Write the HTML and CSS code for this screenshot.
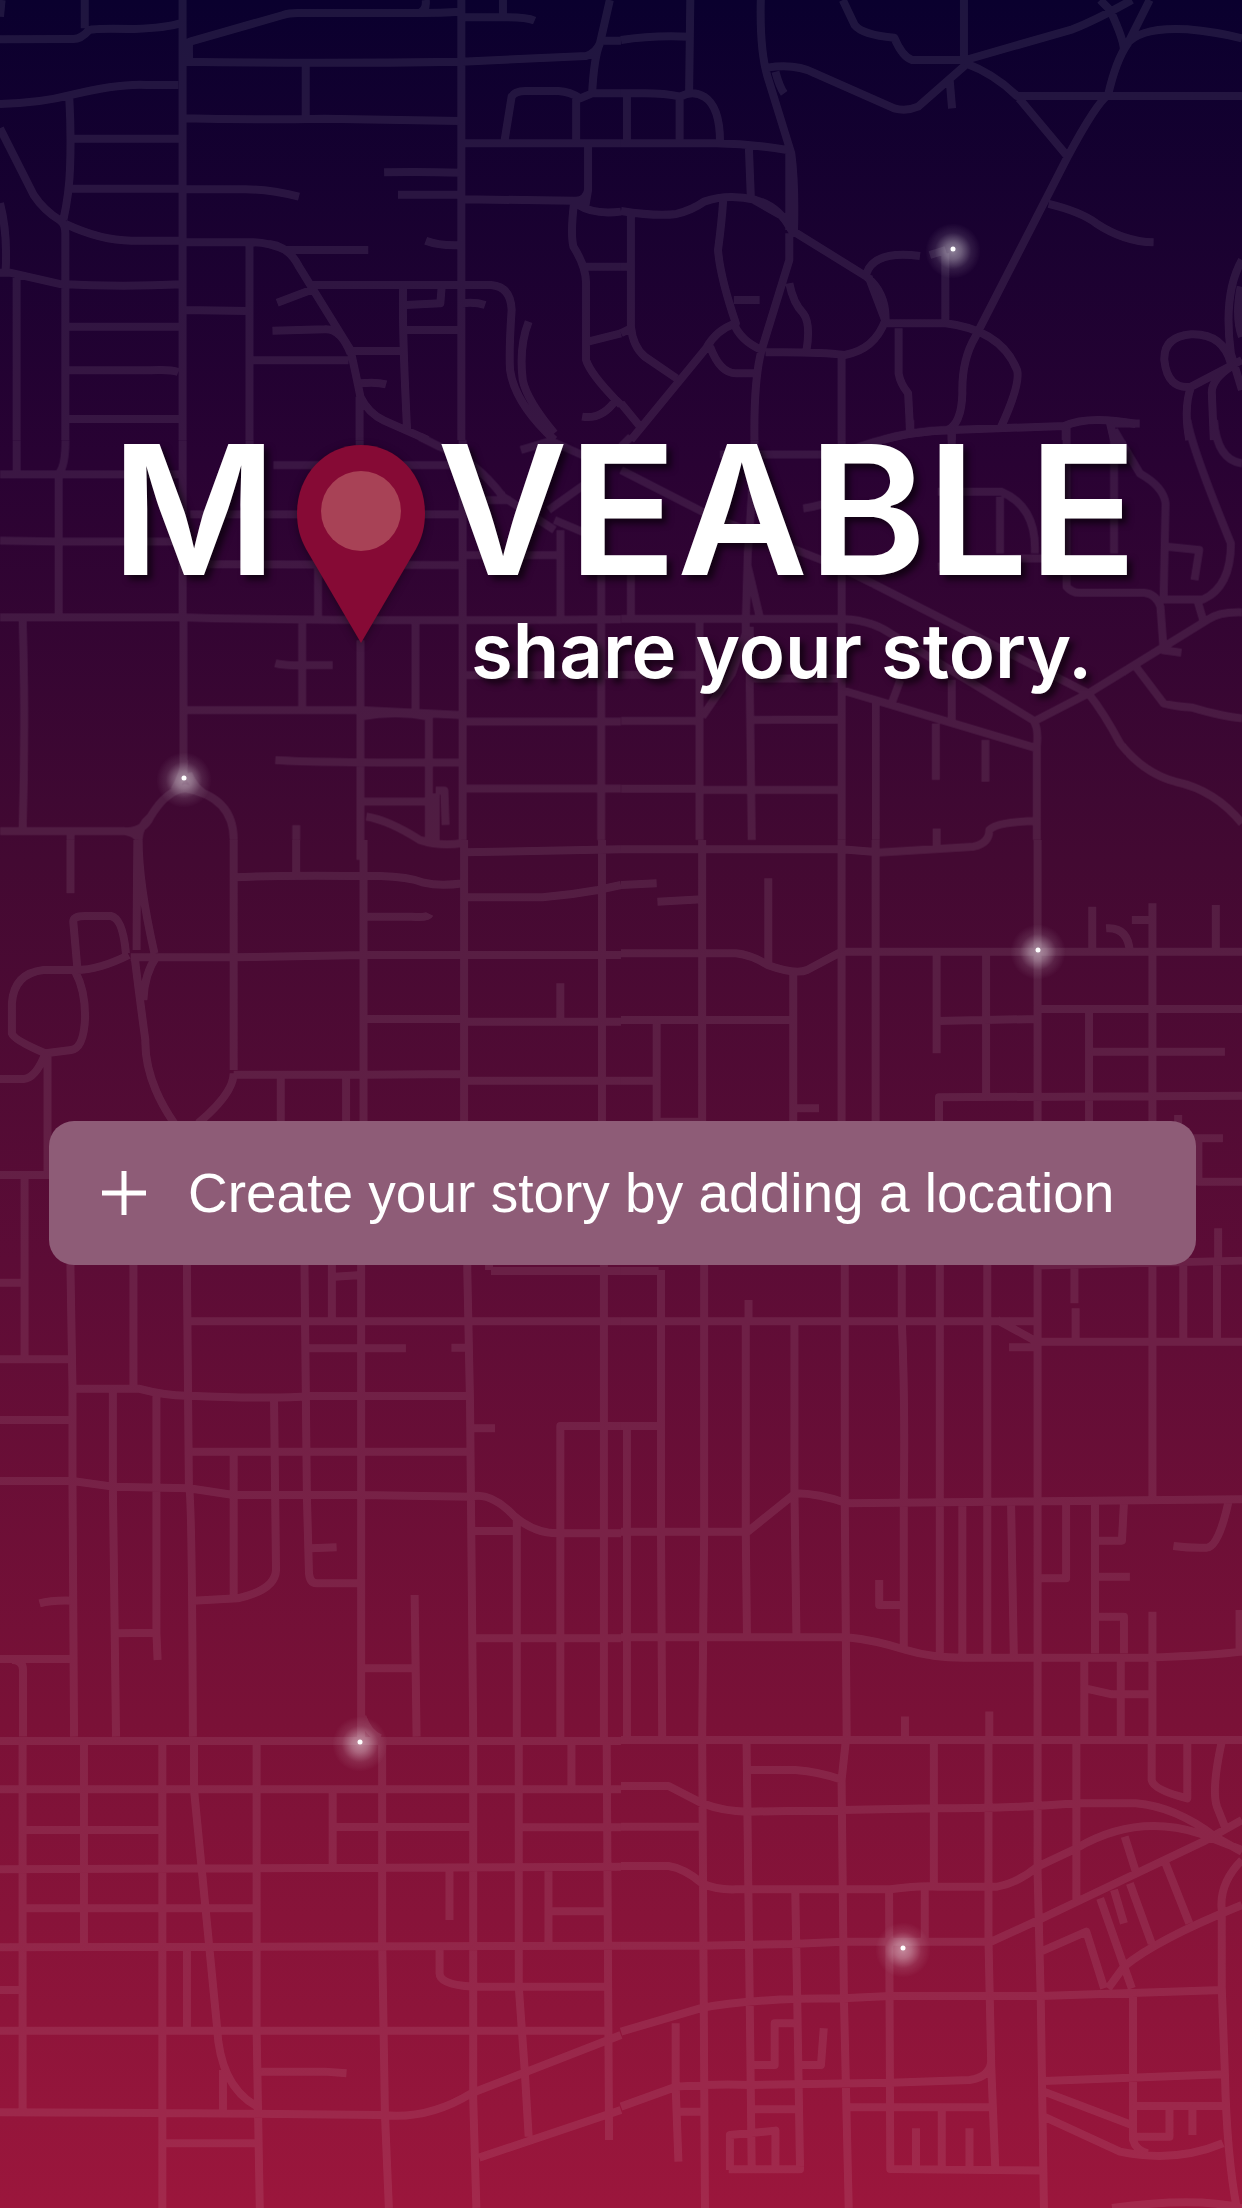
FILE: index.html
```html
<!DOCTYPE html>
<html lang="en">
<head>
<meta charset="utf-8">
<meta name="viewport" content="width=device-width, initial-scale=1">
<title>Moveable</title>
<link rel="stylesheet" href="styles.css">
</head>
<body>
<svg class="map" viewBox="0 0 1242 2208" preserveAspectRatio="xMidYMid slice" aria-hidden="true">
  <defs>
    <radialGradient id="glow">
      <stop offset="0" stop-color="#fff" stop-opacity=".5"/>
      <stop offset=".3" stop-color="#fff" stop-opacity=".36"/>
      <stop offset=".65" stop-color="#fff" stop-opacity=".1"/>
      <stop offset="1" stop-color="#fff" stop-opacity="0"/>
    </radialGradient>
    <g id="beacon"><circle cy="2" r="28" fill="url(#glow)"/><circle r="2.5" fill="#fff"/></g>
  </defs>
  <!-- Streets, one path for each map tile -->
  <g class="roads">
    <path transform="scale(.396 .3333)" d="M461 0V1320M1165 0V1320M214 0V85M-5 118L185 117Q205 117 225 90Q240 84 340 87Q420 84 455 70M4 0L0 50M461 135L480 125L715 45Q730 38 760 39H1040Q1100 40 1165 35M1075 0Q1078 30 1060 38M478 125Q476 140 478 185M461 185Q800 192 1165 185L1480 168Q1505 160 1515 130L1540 0M1165 52H1280Q1330 52 1350 62M1270 0V50M1525 122H1568M772 190V355M461 355Q650 360 820 356L1165 363M1515 130Q1500 170 1495 285M0 312Q100 310 180 285Q300 250 372 255H450M175 295Q180 400 177 500Q175 580 160 660M0 385L85 585Q110 630 150 660Q165 670 165 700V1320M165 672Q260 725 340 722H461M177 416H461M177 566H461M461 568H620Q680 568 755 590M970 517Q1060 515 1165 518M1005 584H1165M1075 722Q1110 738 1165 735M461 727H640Q680 728 720 750H930M680 732Q730 740 755 800L885 1050Q900 1130 910 1190Q930 1240 970 1262L1080 1320M0 610Q20 700 14 815M0 818L25 818L150 852Q300 862 461 853M42 825V1320M165 980H461M165 1111H380Q430 1108 450 1116M165 1257H461M630 735V1320M461 930L630 933M630 1081H880M785 855H1240Q1290 860 1292 930Q1285 1050 1288 1110Q1300 1210 1400 1320M790 868L700 908M688 992L820 988Q860 985 885 1060M885 1053H1018M1018 860Q1015 980 1028 1290M1018 990H1165M1025 915L1112 910L1115 865M1165 910Q1200 905 1225 915M908 1150Q950 1145 975 1153M908 1190V1320M1335 965Q1310 1040 1320 1140Q1330 1200 1400 1300M1165 430H1568M1273 430L1292 290Q1300 272 1330 273H1410Q1440 275 1465 295L1495 280H1568M1455 290V430M1165 598L1450 602Q1480 605 1485 570V430M1450 605Q1440 700 1448 740Q1480 800 1480 850V1080Q1490 1120 1555 1200Q1520 1260 1470 1250M1460 615Q1500 645 1568 635M1480 800H1568M1485 1025L1568 1000M1485 570L1478 620M1555 1200L1568 1215"/>
    <path transform="translate(621) scale(.396 .3333)" d="M0 120Q80 105 172 110M175 0L172 275M353 0Q350 150 370 230L430 460Q440 550 437 690M425 460V690M0 430H240Q330 432 420 450M0 280H60Q110 280 150 290Q180 270 210 290Q250 320 250 425M15 290V425M148 290V425M370 203Q440 190 490 220L690 325Q720 335 750 320L870 195M390 215Q400 260 412 280M560 0L590 75Q610 105 690 113Q710 170 735 180H870L1140 88Q1200 60 1290 0M866 0V180M830 240L836 325M870 190Q940 220 1000 288H1568M1005 295L1128 470M1210 0L1235 30Q1270 120 1270 150M1335 0L1280 130Q1250 180 1230 285Q1200 310 1128 470L895 1010Q860 1080 862 1180Q860 1270 825 1290M1275 135Q1310 80 1430 88Q1500 95 1568 115M1080 612Q1160 635 1200 670Q1270 725 1345 727M0 633Q90 650 140 642Q180 630 210 605Q270 580 340 600Q400 620 430 690L620 830Q670 880 668 960Q640 1050 565 1065Q500 1055 365 1057M323 445L328 595L425 660M258 600Q255 660 245 750Q250 830 290 970Q240 990 215 1045L25 1320M25 640V980Q30 1040 60 1070L140 1135M285 900H350M285 970Q300 1020 355 1050Q335 1140 337 1320M355 1050L425 780V700M425 850Q435 910 460 940Q480 970 468 1055M225 1040Q250 1120 290 1120H345M620 820Q640 750 755 768M625 830L670 970H820Q960 990 1000 1110Q1010 1150 960 1280M819 760V970M780 765L820 750M557 1070V1320M701 985V1120Q705 1150 725 1180L730 1290M660 1320Q730 1295 835 1290L1120 1278Q1180 1245 1300 1272M1123 1280V1320M835 1290V1320M1235 1270L1245 1320M0 1210L45 1275M0 800H20M0 1000L25 985M1568 780Q1520 880 1540 1060L1568 1170M1540 1090Q1520 1000 1440 1003Q1370 1010 1372 1080Q1380 1170 1440 1160L1568 1080M1440 1160Q1420 1220 1435 1320M1540 1100Q1490 1140 1492 1180L1497 1320M1565 860Q1550 950 1568 1010"/>
    <path transform="translate(0 420) scale(.396 .3333)" d="M42 60V160M165 60Q165 140 148 160V590M0 163H461M461 60V590M630 60V130M690 135H1165M0 362L150 365H461M480 283H1165M475 432L1165 435M803 430V590M0 592H461Q800 605 1568 598M57 600Q65 900 57 1230M463 590V1080M763 600V870M695 730Q720 738 763 735H840M1049 610V880M908 60V80M910 660V1320M463 870H910L1165 885M910 890Q1000 870 1083 890V1270M695 1020Q800 1028 1165 1028M910 1145H1083M925 1190Q980 1200 1060 1260Q1110 1280 1165 1270M1100 1112L1122 1112L1125 1215M1100 1120V1265M1168 60V1260M1168 905H1568M1168 1106H1568M1168 765H1568M0 1233H310Q360 1240 380 1190Q420 1110 468 1105Q590 1130 590 1260M310 1233Q350 1240 347 1260M380 1190Q350 1220 350 1260M440 1110Q465 1060 465 1020M475 1060Q490 1110 530 1130M178 1240V1260M748 1215V1260M1518 460V1260M1415 330V590M1060 50L1110 80Q1200 120 1270 230L1400 330M1385 60L1480 110M1200 240H1290M1385 270L1480 190M1315 90L1400 60M1165 405H1415M1400 300L1480 340"/>
    <path transform="translate(621 420) scale(.396 .3333)" d="M25 50L0 80M337 60Q330 250 320 400L315 600M557 60V1260M250 103H550Q700 30 835 30M730 0V40M835 30V210M0 150L230 290L560 445L1180 820M320 440L350 590M25 460V600M0 597H560Q630 600 680 640L1040 900Q1055 920 1050 980V1260M1050 900L1180 820L1480 600Q1510 575 1568 577M1180 820Q1220 880 1260 970Q1320 1060 1400 1085Q1500 1110 1568 1210M557 810L1050 985M1125 20V500Q1140 520 1160 518H1320Q1350 520 1362 560L1370 690M1245 30V400M1245 30L1310 160Q1370 200 1375 250L1370 538H1470Q1540 500 1540 370Q1440 80 1430 0M1455 540L1470 600M1380 380L1460 390L1448 480M1497 0Q1505 120 1568 130M1125 415H1000Q900 430 800 440M800 215H960Q1050 260 1045 400M957 230V400M460 265Q500 260 560 230M1245 10H1310M1300 740L1370 850Q1400 860 1440 862Q1520 890 1568 895M198 600V1260M325 620V800L330 1260M315 600V640L280 760L205 890M0 903H200M325 900L557 898M0 1106H200M205 1110H557M643 850V1260M705 780L685 845M835 780V905M795 910V1080M920 960V1085M797 1225V1290M0 765H200M325 775H557M643 1298L890 1280Q930 1270 930 1230Q950 1205 1050 1203M1365 690L1415 698"/>
    <path transform="translate(0 840) scale(.396 .3333)" d="M178 0V160M347 0Q345 200 345 330M350 0Q350 130 390 340M590 0V690M748 0V100M590 112Q700 105 920 108H960Q1030 110 1070 128Q1110 140 1170 130M918 0V850M922 230H1040Q1080 235 1085 222M1172 0V850M1520 0V850M1172 37L1568 28M1172 172H1370Q1440 165 1510 150L1568 135M330 352H590L918 345H1568M192 390Q250 390 325 345M195 380L185 245Q185 228 215 228H280Q310 235 318 340M192 390H110Q35 400 30 490V580Q35 600 115 640L180 630Q212 625 215 530Q215 450 190 395M115 640Q90 715 60 717H0M120 640V1000M340 350Q350 450 367 600Q365 720 440 850M395 350Q365 400 362 480M500 850Q590 760 590 700M590 704H920L1172 702M709 710V850M874 710V850M922 537H1172M1172 545H1568M1415 430V540M1172 722H1568M0 1005H125M62 1010V1290M178 1270V1290M337 1270V1290M472 1270V1290M769 1270V1290M838 1270V1290M912 1270V1290M1180 1270V1290M1235 1270V1290M1525 1270V1290"/>
    <path transform="translate(621 840) scale(.396 .3333)" d="M0 28H557L643 36M205 0V850M557 0V850M643 0V850M372 115V370M0 135L90 130M92 185L205 178M0 340H290Q330 345 370 375Q440 405 470 390L557 335H1568M435 400V850M1052 0V850M797 345V640M922 345V770M1190 200V335M1225 265Q1280 260 1285 335M1290 240H1342M1342 190V850M1502 195V335M0 540H435M797 543L1052 537M1052 507H1568M1182 510V850M1185 635H1525M803 850V772L1568 767M90 545V850M0 722H90M100 845H205M440 805H500M1407 825V850M1440 895H1520M1458 900V1025H1568M210 1270V1290M565 1270V1290M709 1270V1290M805 1270V1290M925 1270V1290M1052 1270V1290M1145 1270V1290M1052 1277L1568 1262M1342 1270V1290M1420 1270V1290M1505 1270V1290M1508 1165V1270"/>
    <path transform="translate(0 1270) scale(.396 .3333)" d="M62 0V265M178 0L183 350V640L187 1400M337 0V355M472 0L477 650Q485 670 487 1400M0 38H60M0 268H178M769 0L775 680L780 900Q780 940 800 940H912M838 0V150M912 0V1410M845 20L912 15M1180 0L1187 400L1195 1410M1525 0V1420M1240 3H1568M477 154H1568M775 235H1025M1140 233H1187M183 356H350Q420 378 477 377Q700 388 780 378H1187M0 450H183M0 633H183L285 650L477 655L590 675H912L1190 680Q1240 665 1300 740Q1350 790 1410 790H1568M285 360V650L293 1400M395 375V1090L398 1170M293 1090L395 1088M692 385L697 900Q695 960 600 985L487 992M477 545H1187M590 550V980M1187 475H1250M1305 750V1420M1195 783H1305M1415 1420V468H1568M785 835L850 832M100 1000Q130 990 183 992M0 1167H187M30 1170Q58 1170 58 1200V1400M1195 1105H1568M1047 975L1052 1400M912 1195H1047M0 1413H1568M915 1340Q930 1390 960 1405"/>
    <path transform="translate(621 1270) scale(.396 .3333)" d="M0 3H95M101 0V780L104 1400M210 0V780L205 1400M0 154H1052M322 90V154M565 0V690L570 1410M709 0V150Q718 400 714 690V1130M805 0V1160M925 0V1160M1052 0V1400M1145 0V100M1148 115V215M1342 0V690M1420 0V215M1505 0V215M950 150L1050 215H1568M980 232H1050M315 154V780L318 1090M438 154V670L443 1090M0 468H100M15 475V1400M0 785H320L440 670Q500 670 570 700Q800 695 1568 688M862 700V1160M985 700L992 1160M1124 700V925H1060M1197 700V1150M1270 700L1265 812H1205M1535 690Q1510 830 1480 833Q1440 835 1395 828M1205 920H1285M1205 1040H1270V1150M1342 1025V1400M0 1102H570Q640 1110 720 1140Q790 1165 880 1163H1340Q1500 1155 1568 1145M652 930V1005H714M1170 1165V1400M1172 1255L1240 1273H1342M1262 1165V1400M1562 1020V1150M717 1340V1400M930 1325V1400M0 1410H1568"/>
    <path transform="translate(0 1740) scale(.396 .3333)" d="M57 0V1115M212 0V610M410 0V1404M490 0V150L548 860Q555 1040 650 1100M648 0V870L656 1404M0 148H1568M965 0V600L972 1120L982 1404M1195 0V1080L1203 1404M1310 0V740L1325 990L1335 1190M1443 0V140M1532 0L1538 1200M57 270H410M0 388L1568 380M840 148V380M840 261H1195M1320 262H1568M57 505H648M0 622L1568 617M1135 390V540M1385 385V610M1385 514H1532M0 750H50M472 630V870M0 872H1540M1110 625V700Q1110 735 1195 740H1532M660 995H820L875 1000M0 1117L410 1119L965 1125Q1080 1140 1190 1060L1568 885M563 990V1110M410 1210H656M1210 1253L1568 1110"/>
    <path transform="translate(621 1740) scale(.396 .3333)" d="M205 0L212 1404M317 0L325 780L330 1280M568 0L557 120L563 780L575 1404M790 0V440M928 0V600L935 980L945 1280M1052 0V400L1060 780L1068 1404M1150 0V480M0 138H120L205 190Q260 215 320 215L790 205Q1000 205 1150 190H1300Q1400 200 1500 290L1568 335M317 90H440Q500 95 560 120M0 260H200M0 378H120Q160 385 205 430Q240 450 290 448H680Q760 435 800 440H950Q1000 430 1052 380L1150 325Q1300 220 1460 280L1568 330M0 617H200L430 612L560 605H935L1055 540L1470 305L1568 240M440 450L445 780L452 1280M677 450L680 1287L1065 1292M767 445V600M0 875L200 805Q320 775 560 775L680 768H1060L1520 750M1518 0Q1490 150 1505 200L1525 260M1568 360Q1510 430 1517 510V740L1525 1000Q1530 1250 1555 1404M1340 0V120Q1345 150 1430 175V0M1568 495Q1350 600 1270 680L1230 745M1210 475L1290 745M1285 430L1340 610M1375 370L1435 550M1272 290L1300 395M1245 450L1270 550M1060 635L1175 575L1220 745M138 850V1040L145 1265M0 1100L140 1040Q240 1030 330 1035L680 1028L880 1020Q935 1010 935 960M145 1115H205M325 975H388V850H445M452 975H505L512 865M330 1108H450M275 1290V1185L390 1172V1290M272 1288H452V1260M575 1102H940M810 1105V1280M745 1165V1280M880 1165V1280M1068 1023L1520 1003M1293 765V1200Q1300 1230 1330 1240M1068 1055L1290 1155M1068 1130L1260 1235Q1400 1270 1520 1210M1293 1098H1525M1300 1190H1385V1110M1443 1110V1185M1240 1404Q1450 1370 1568 1404"/>
  </g>
  <use href="#beacon" x="953" y="249"/>
  <use href="#beacon" x="184" y="778"/>
  <use href="#beacon" x="1038" y="950"/>
  <use href="#beacon" x="360" y="1742"/>
  <use href="#beacon" x="903" y="1948"/>
</svg>
<main class="screen">
  <header class="brand">
    <h1 class="wordmark" aria-label="Moveable">
      <span>M</span>
      <svg class="pin" viewBox="0 0 128 198" aria-hidden="true">
        <path fill="#860a35" d="M64 0C28 0 0 30 0 68c0 14 3 25 9 36l55 94 55-94c6-11 9-22 9-36C128 30 100 0 64 0z"/>
        <circle cx="64" cy="66" r="40" fill="#a84256"/>
      </svg>
      <span>VEABLE</span>
    </h1>
    <p class="tagline">share your story.</p>
  </header>
  <button class="create" type="button">
    <svg class="plus" viewBox="0 0 44 44" aria-hidden="true"><path d="M22 0v44M0 22h44"/></svg>
    <span>Create your story by adding a location</span>
  </button>
</main>
</body>
</html>
```
FILE: styles.css
```css
* { box-sizing: border-box; }

body {
  margin: 0;
  position: relative;
  min-height: 100vh;
  overflow-x: hidden;
  color: #fff;
  background: linear-gradient(#0a002e 0%, #290233 21%, #430932 39%, #5c0c36 57%, #7a1137 78%, #9b163c 100%);
}

.map {
  position: absolute;
  inset: 0;
  width: 100%;
  height: 100%;
}

.roads {
  fill: none;
  stroke: #fff;
  stroke-width: 8px;
  stroke-linejoin: round;
  opacity: .085;
}

.roads path { vector-effect: non-scaling-stroke; }

.screen {
  position: relative;
  padding: 412px 46px 0 49px;
}

.brand {
  padding-left: 62px;
  font-family: Inter, sans-serif;
  font-weight: 600;
  text-shadow: 5px 5px 6px rgba(0, 0, 0, .6);
}

.wordmark {
  display: flex;
  align-items: flex-start;
  gap: 12px;
  height: 194px;
  margin: 0;
  font-size: 180px;
  font-weight: 600;
  line-height: 196px;
}

.pin {
  width: 128px;
  height: 198px;
  margin: 33px 0 0 8px;
  filter: drop-shadow(0 2px 4px rgba(0, 0, 0, .4));
}

.tagline {
  margin: 0;
  padding-left: 360px;
  font-size: 76px;
  line-height: 88px;
}

.create {
  display: flex;
  align-items: center;
  gap: 42px;
  width: 100%;
  min-height: 144px;
  margin-top: 427px;
  padding: 0 53px;
  border: 0;
  border-radius: 25px;
  background: #8e5c77;
  color: #fff;
  font: 400 55px/64px "Liberation Sans", Arial, sans-serif;
  text-align: left;
  cursor: pointer;
}

.plus {
  flex: none;
  width: 44px;
  height: 44px;
  fill: none;
  stroke: #fff;
  stroke-width: 5px;
}
```
